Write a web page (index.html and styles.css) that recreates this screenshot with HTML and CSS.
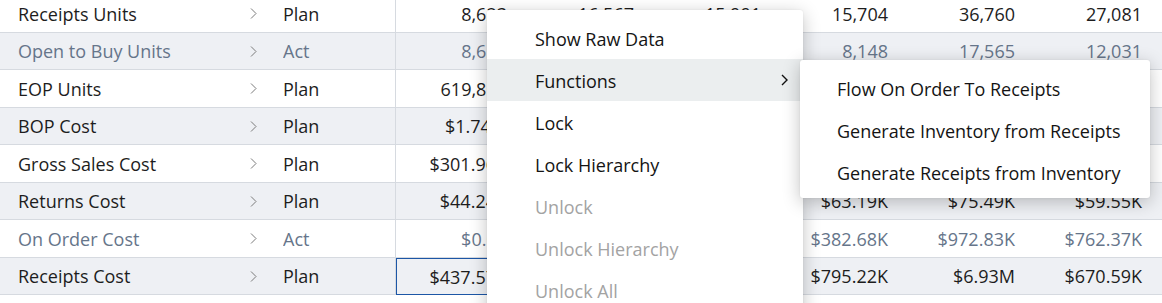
FILE: index.html
```html
<!DOCTYPE html>
<html lang="en">
<head>
    <meta charset="UTF-8">
    <title>Plan Grid</title>
    <link rel="stylesheet" href="styles.css">
</head>
<body>
    <div class="grid">
        <div class="row">
            <div class="label">Receipts Units</div>
            <div class="expand"><svg width="7" height="11" viewBox="0 0 7 11"><polyline points="1,0.5 6,5.5 1,10.5"/></svg></div>
            <div class="version">Plan</div>
            <div class="num">8,623</div><div class="num">16,567</div><div class="num">15,991</div><div class="num">15,704</div><div class="num">36,760</div><div class="num">27,081</div>
        </div>
        <div class="row alt actual">
            <div class="label">Open to Buy Units</div>
            <div class="expand"><svg width="7" height="11" viewBox="0 0 7 11"><polyline points="1,0.5 6,5.5 1,10.5"/></svg></div>
            <div class="version">Act</div>
            <div class="num">8,623</div><div class="num">16,567</div><div class="num">15,991</div><div class="num">8,148</div><div class="num">17,565</div><div class="num">12,031</div>
        </div>
        <div class="row">
            <div class="label">EOP Units</div>
            <div class="expand"><svg width="7" height="11" viewBox="0 0 7 11"><polyline points="1,0.5 6,5.5 1,10.5"/></svg></div>
            <div class="version">Plan</div>
            <div class="num">619,812</div><div class="num">623,410</div><div class="num">611,205</div><div class="num">598,340</div><div class="num">605,118</div><div class="num">592,774</div>
        </div>
        <div class="row alt">
            <div class="label">BOP Cost</div>
            <div class="expand"><svg width="7" height="11" viewBox="0 0 7 11"><polyline points="1,0.5 6,5.5 1,10.5"/></svg></div>
            <div class="version">Plan</div>
            <div class="num">$1.74M</div><div class="num">$1.73M</div><div class="num">$1.71M</div><div class="num">$1.70M</div><div class="num">$1.68M</div><div class="num">$1.66M</div>
        </div>
        <div class="row">
            <div class="label">Gross Sales Cost</div>
            <div class="expand"><svg width="7" height="11" viewBox="0 0 7 11"><polyline points="1,0.5 6,5.5 1,10.5"/></svg></div>
            <div class="version">Plan</div>
            <div class="num">$301.96K</div><div class="num">$412.08K</div><div class="num">$388.51K</div><div class="num">$356.27K</div><div class="num">$902.14K</div><div class="num">$640.33K</div>
        </div>
        <div class="row alt">
            <div class="label">Returns Cost</div>
            <div class="expand"><svg width="7" height="11" viewBox="0 0 7 11"><polyline points="1,0.5 6,5.5 1,10.5"/></svg></div>
            <div class="version">Plan</div>
            <div class="num">$44.24K</div><div class="num">$58.12K</div><div class="num">$55.70K</div><div class="num">$63.19K</div><div class="num">$75.49K</div><div class="num">$59.55K</div>
        </div>
        <div class="row actual">
            <div class="label">On Order Cost</div>
            <div class="expand"><svg width="7" height="11" viewBox="0 0 7 11"><polyline points="1,0.5 6,5.5 1,10.5"/></svg></div>
            <div class="version">Act</div>
            <div class="num">$0.00</div><div class="num">$215.40K</div><div class="num">$398.02K</div><div class="num">$382.68K</div><div class="num">$972.83K</div><div class="num">$762.37K</div>
        </div>
        <div class="row alt">
            <div class="label">Receipts Cost</div>
            <div class="expand"><svg width="7" height="11" viewBox="0 0 7 11"><polyline points="1,0.5 6,5.5 1,10.5"/></svg></div>
            <div class="version">Plan</div>
            <div class="num selected">$437.57K</div><div class="num">$841.39K</div><div class="num">$810.66K</div><div class="num">$795.22K</div><div class="num">$6.93M</div><div class="num">$670.59K</div>
        </div>
    </div>

    <ul class="menu">
        <li>Show Raw Data</li>
        <li class="active has-sub">Functions
            <svg class="sub-arrow" width="7" height="12" viewBox="0 0 7 12"><polyline points="1,1 6,6 1,11"/></svg>
        </li>
        <li>Lock</li>
        <li>Lock Hierarchy</li>
        <li class="disabled">Unlock</li>
        <li class="disabled">Unlock Hierarchy</li>
        <li class="disabled">Unlock All</li>
    </ul>

    <ul class="menu submenu">
        <li>Flow On Order To Receipts</li>
        <li>Generate Inventory from Receipts</li>
        <li>Generate Receipts from Inventory</li>
    </ul>
</body>
</html>
```

FILE: styles.css
```css
body {
    margin: 0;
    height: 303px;
    overflow: hidden;
    font-family: "Open Sans", "Noto Sans", sans-serif;
    font-size: 18px;
    color: #1d1d1d;
    background: #fff;
}
.grid {
    margin-top: -5px;
}
.row {
    display: grid;
    grid-template-columns: 245px 38px 113px repeat(6, 127px);
    height: 37.5px;
    box-sizing: border-box;
    border-bottom: 1px solid #d6dae0;
    align-items: stretch;
}
.row.alt {
    background: #eef0f4;
}
.row.actual {
    color: #66758a;
}
.row > div {
    display: flex;
    align-items: center;
    padding-top: 1px;
    white-space: nowrap;
    overflow: hidden;
}
.label {
    padding-left: 18px;
}
.expand {
    padding-left: 5px;
}
.expand svg {
    fill: none;
    stroke: #7a7a7a;
    stroke-width: 1;
}
.version {
    border-right: 1px solid #d6dae0;
}
.num {
    justify-content: flex-end;
    padding-right: 16px;
}
.num.selected {
    box-shadow: inset 0 0 0 1px #1c56a6;
    margin-bottom: -1px;
}

.menu {
    position: absolute;
    left: 487px;
    top: 10px;
    width: 316px;
    margin: 0;
    padding: 7px 0;
    list-style: none;
    background: #fff;
    border-radius: 3px;
    box-shadow: 0 4px 18px rgba(0, 0, 0, 0.24), 0 0 2px rgba(0, 0, 0, 0.08);
    color: #141414;
}
.menu li {
    position: relative;
    height: 42px;
    line-height: 44px;
    padding-left: 48px;
}
.menu li.active {
    background: #ebeeef;
}
.menu li.disabled {
    color: #a3a3a3;
}
.sub-arrow {
    position: absolute;
    right: 15px;
    top: 15px;
    fill: none;
    stroke: #111;
    stroke-width: 1.4;
}
.submenu {
    left: 800px;
    top: 60px;
    width: 350px;
    padding: 7px 0 5px;
}
.submenu li {
    padding-left: 37px;
}
```
